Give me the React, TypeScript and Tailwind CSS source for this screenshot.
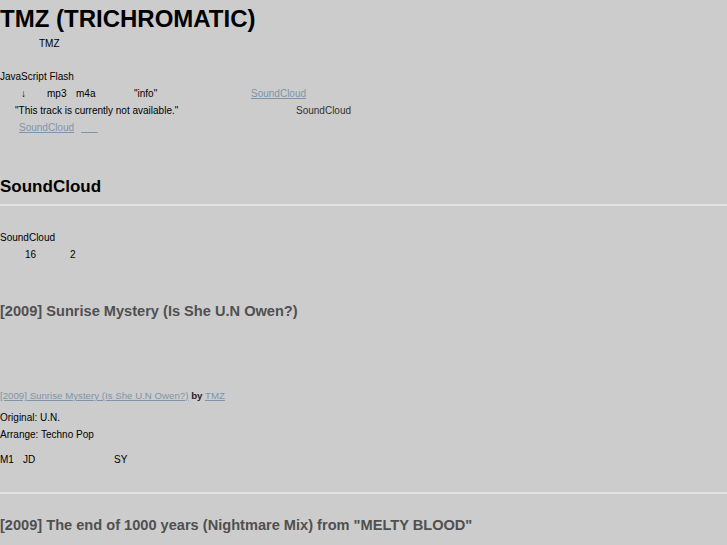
export default function App() {
  const link = "text-[#7f95a7] underline";
  return (
    <div className="min-h-[545px] bg-[#cccccc] text-[10px] leading-[17px] text-black font-['Liberation_Sans',Arial,sans-serif]">
      <h1 className="pt-[5px] text-[24px] font-bold leading-[28px]">TMZ (TRICHROMATIC)</h1>
      <p className="mt-[2px] pl-[39px]">TMZ</p>

      <p className="mt-[16px]">JavaScript Flash</p>
      <div className="flex pl-[21px]">
        <span className="w-[26px] font-bold">↓</span>
        <span className="w-[29px]">mp3</span>
        <span className="w-[58px]">m4a</span>
        <span className="w-[117px]">"info"</span>
        <a className={link}>SoundCloud</a>
      </div>
      <div className="flex pl-[15px]">
        <span className="w-[281px]">"This track is currently not available."</span>
        <span className="text-[#333]">SoundCloud</span>
      </div>
      <div className="flex pl-[19px]">
        <a className={`${link} w-[62px]`}>SoundCloud</a>
        <a className={link}>{"\u00a0\u00a0\u00a0\u00a0\u00a0\u00a0"}</a>
      </div>

      <h2 className="mt-[39px] text-[17px] font-bold leading-[24px]">SoundCloud</h2>
      <div className="mt-[5px] h-[2px] bg-[#e3e3e3]" />

      <p className="mt-[23px]">SoundCloud</p>
      <div className="flex pl-[25px]">
        <span className="w-[45px]">16</span>
        <span>2</span>
      </div>

      <h3 className="mt-[37px] text-[14.6px] font-bold leading-[22px] text-[#505050]">
        [2009] Sunrise Mystery (Is She U.N Owen?)
      </h3>

      <p className="mt-[65px] text-[9.7px]">
        <a className={link}>[2009] Sunrise Mystery (Is She U.N Owen?)</a>{" "}
        <span className="font-bold text-[#222]">by</span> <a className={link}>TMZ</a>
      </p>
      <p className="mt-[5px]">Original: U.N.</p>
      <p>Arrange: Techno Pop</p>
      <div className="mt-[8px] flex">
        <span className="w-[23px]">M1</span>
        <span className="w-[91px]">JD</span>
        <span>SY</span>
      </div>

      <div className="mt-[24px] h-[2px] bg-[#e3e3e3]" />
      <h3 className="mt-[20px] text-[14.6px] font-bold leading-[22px] text-[#505050]">
        [2009] The end of 1000 years (Nightmare Mix) from "MELTY BLOOD"
      </h3>
    </div>
  );
}
